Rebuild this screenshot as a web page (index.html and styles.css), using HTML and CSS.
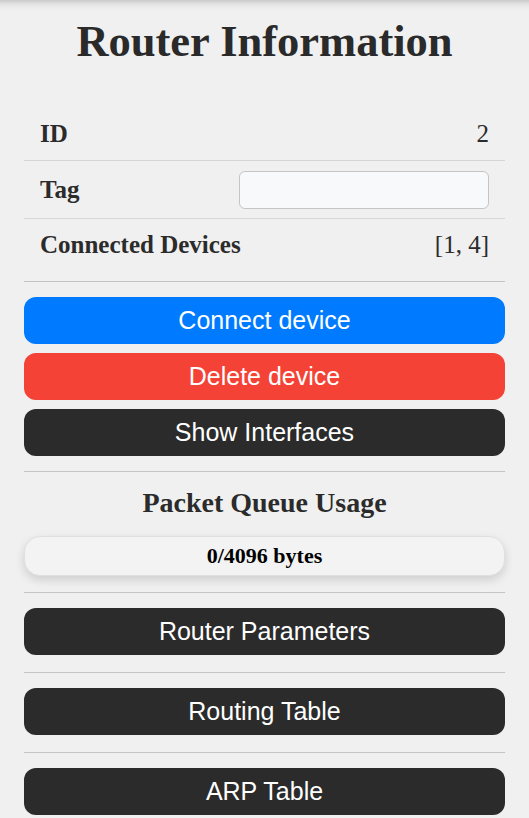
FILE: index.html
```html
<!DOCTYPE html>
<html lang="en">
<head>
<meta charset="utf-8">
<title>Router Information</title>
<link rel="stylesheet" href="styles.css">
</head>
<body>
<main class="panel">
  <h1 class="title">Router Information</h1>
  <div class="info">
    <div class="info-row">
      <span class="info-label">ID</span>
      <span class="info-value">2</span>
    </div>
    <div class="info-row info-row-input">
      <span class="info-label">Tag</span>
      <input class="tag-input" type="text" aria-label="Tag">
    </div>
    <div class="info-row">
      <span class="info-label">Connected Devices</span>
      <span class="info-value">[1, 4]</span>
    </div>
  </div>
  <section class="group group-actions">
    <button class="btn btn-blue">Connect device</button>
    <button class="btn btn-red">Delete device</button>
    <button class="btn btn-dark">Show Interfaces</button>
  </section>
  <section class="group group-queue">
    <h2 class="queue-title">Packet Queue Usage</h2>
    <div class="queue-bar">0/4096 bytes</div>
  </section>
  <section class="group group-single">
    <button class="btn btn-dark">Router Parameters</button>
  </section>
  <section class="group group-single">
    <button class="btn btn-dark">Routing Table</button>
  </section>
  <section class="group group-single">
    <button class="btn btn-dark">ARP Table</button>
  </section>
</main>
</body>
</html>
```

FILE: styles.css
```css
html, body {
  margin: 0;
  padding: 0;
}

body {
  background: #f0f0f0 linear-gradient(to bottom, #c9c9c9 0px, #e2e2e2 4px, #ececec 8px, #f0f0f0 12px) no-repeat;
  font-family: "Liberation Serif", "Times New Roman", serif;
  color: #2b2b2b;
}

.panel {
  padding: 15px 24px 0;
}

.title {
  margin: 0 0 41px;
  font-size: 44.5px;
  font-weight: bold;
  text-align: center;
  line-height: normal;
  color: #2a2a2a;
}

.info {
  margin-bottom: 10px;
}

.info-row {
  display: flex;
  align-items: center;
  justify-content: space-between;
  padding: 10px 16px;
  font-size: 25px;
  line-height: 32px;
  border-bottom: 1px solid #d6d6d6;
}

.info-row-input {
  padding: 10px 16px 9px;
}

.info-row:last-child {
  border-bottom: none;
}

.info-label {
  font-weight: bold;
}

.info-value {
  font-weight: normal;
}

.tag-input {
  box-sizing: border-box;
  width: 250px;
  height: 38px;
  margin: 0;
  border: 1px solid #c4c4c4;
  border-radius: 6px;
  background: #f8f9fb;
  font-size: 16px;
  padding: 0 10px;
}

.group {
  border-top: 1px solid #c4c4c4;
  padding: 15px 0;
}

.group-actions {
  display: flex;
  flex-direction: column;
  gap: 9px;
}

.group-queue {
  padding: 15px 0 16px;
}

.group-single {
  padding: 15px 0 17px;
}

.btn {
  display: block;
  box-sizing: border-box;
  width: 100%;
  height: 47px;
  margin: 0;
  padding: 0;
  border: none;
  border-radius: 12px;
  font-family: "Liberation Sans", Arial, sans-serif;
  font-size: 25px;
  color: #ffffff;
  text-align: center;
}

.btn-blue {
  background: #007bff;
}

.btn-red {
  background: #f44336;
}

.btn-dark {
  background: #2b2b2b;
}

.queue-title {
  margin: 0 0 17px;
  font-size: 28px;
  font-weight: bold;
  line-height: 32px;
  text-align: center;
  color: #2b2b2b;
}

.queue-bar {
  box-sizing: border-box;
  height: 40px;
  border: 1px solid #e0e0e0;
  border-radius: 16px;
  background: #f3f3f3;
  box-shadow: 0 4px 10px rgba(0, 0, 0, 0.14);
  display: flex;
  align-items: center;
  justify-content: center;
  font-size: 22px;
  font-weight: bold;
  color: #000000;
}
```
